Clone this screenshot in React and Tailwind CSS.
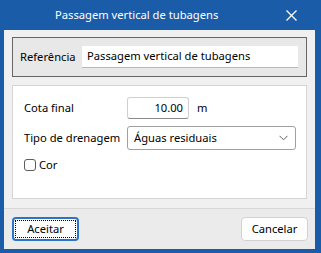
export default function App() {
  const font = { fontFamily: '"Noto Sans", "Open Sans", sans-serif' };
  return (
    <div className="w-[321px] h-[253px] bg-[#1b5ca8] flex flex-col pl-[4px] pr-[6px] pb-[4px] text-[11.2px] text-black whitespace-nowrap" style={font}>
      <div className="h-[30px] shrink-0 flex items-center relative text-white">
        <div className="pl-[51px] text-[11.2px] leading-none">Passagem vertical de tubagens</div>
        <div className="absolute right-[18px] top-[10px]">
          <svg width="11" height="11" viewBox="0 0 11 11">
            <path d="M0.5 0.5 L10.5 10.5 M10.5 0.5 L0.5 10.5" stroke="white" strokeWidth="1.3" />
          </svg>
        </div>
      </div>
      <div className="flex-1 bg-[#f0f0f0] flex flex-col">
        <div className="px-[8px] pt-[7px] flex flex-col">
          <div className="h-[40px] border border-[#666666] bg-[#e8e8e8] flex items-center pl-[7px] pr-[8px]">
            <span className="w-[62px]">Referência</span>
            <div className="flex-1 h-[22px] bg-white border-b border-[#b8b8b8] flex items-center pl-[5px]">
              Passagem vertical de tubagens
            </div>
          </div>
          <div className="mt-[8px] h-[114px] border border-[#d5d5d5] bg-white flex flex-col pl-[11px] pt-[11px]">
            <div className="flex items-center h-[22px]">
              <span className="w-[103px]">Cota final</span>
              <div className="w-[62px] h-[22px] border border-[#d0d0d0] rounded-[3px] border-b-[#8a8a8a] flex items-center justify-end pr-[5px]">10.00</div>
              <span className="ml-[8px]">m</span>
            </div>
            <div className="flex items-center h-[24px] mt-[7px]">
              <span className="w-[103px]">Tipo de drenagem</span>
              <div className="w-[169px] h-[24px] border border-[#a0a0a0] rounded-[3px] flex items-center pl-[6px] pr-[7px] justify-between">
                <span>Águas residuais</span>
                <svg width="9" height="6" viewBox="0 0 9 6">
                  <path d="M0.5 0.8 L4.5 4.8 L8.5 0.8" stroke="#606060" strokeWidth="1" fill="none" />
                </svg>
              </div>
            </div>
            <div className="flex items-center mt-[9px] h-[12px]">
              <div className="w-[12px] h-[12px] border border-[#5c5c5c] rounded-[3px] bg-white"></div>
              <span className="ml-[3px]">Cor</span>
            </div>
          </div>
        </div>
        <div className="mt-[9px] flex-1 border-t border-[#d8d8d8] bg-[#ebebeb] flex justify-between items-start pl-[8px] pr-[7px] pt-[8px]">
          <button className="w-[67px] h-[24px] rounded-[4px] border-2 border-[#2a74c9] bg-[#fdfdfd] flex items-center justify-center p-[1px]">
            <span className="w-full h-full border border-dotted border-black flex items-center justify-center">Aceitar</span>
          </button>
          <button className="w-[67px] h-[24px] rounded-[4px] border border-[#d2d2d2] bg-[#fdfdfd] flex items-center justify-center">
            Cancelar
          </button>
        </div>
      </div>
    </div>
  );
}
